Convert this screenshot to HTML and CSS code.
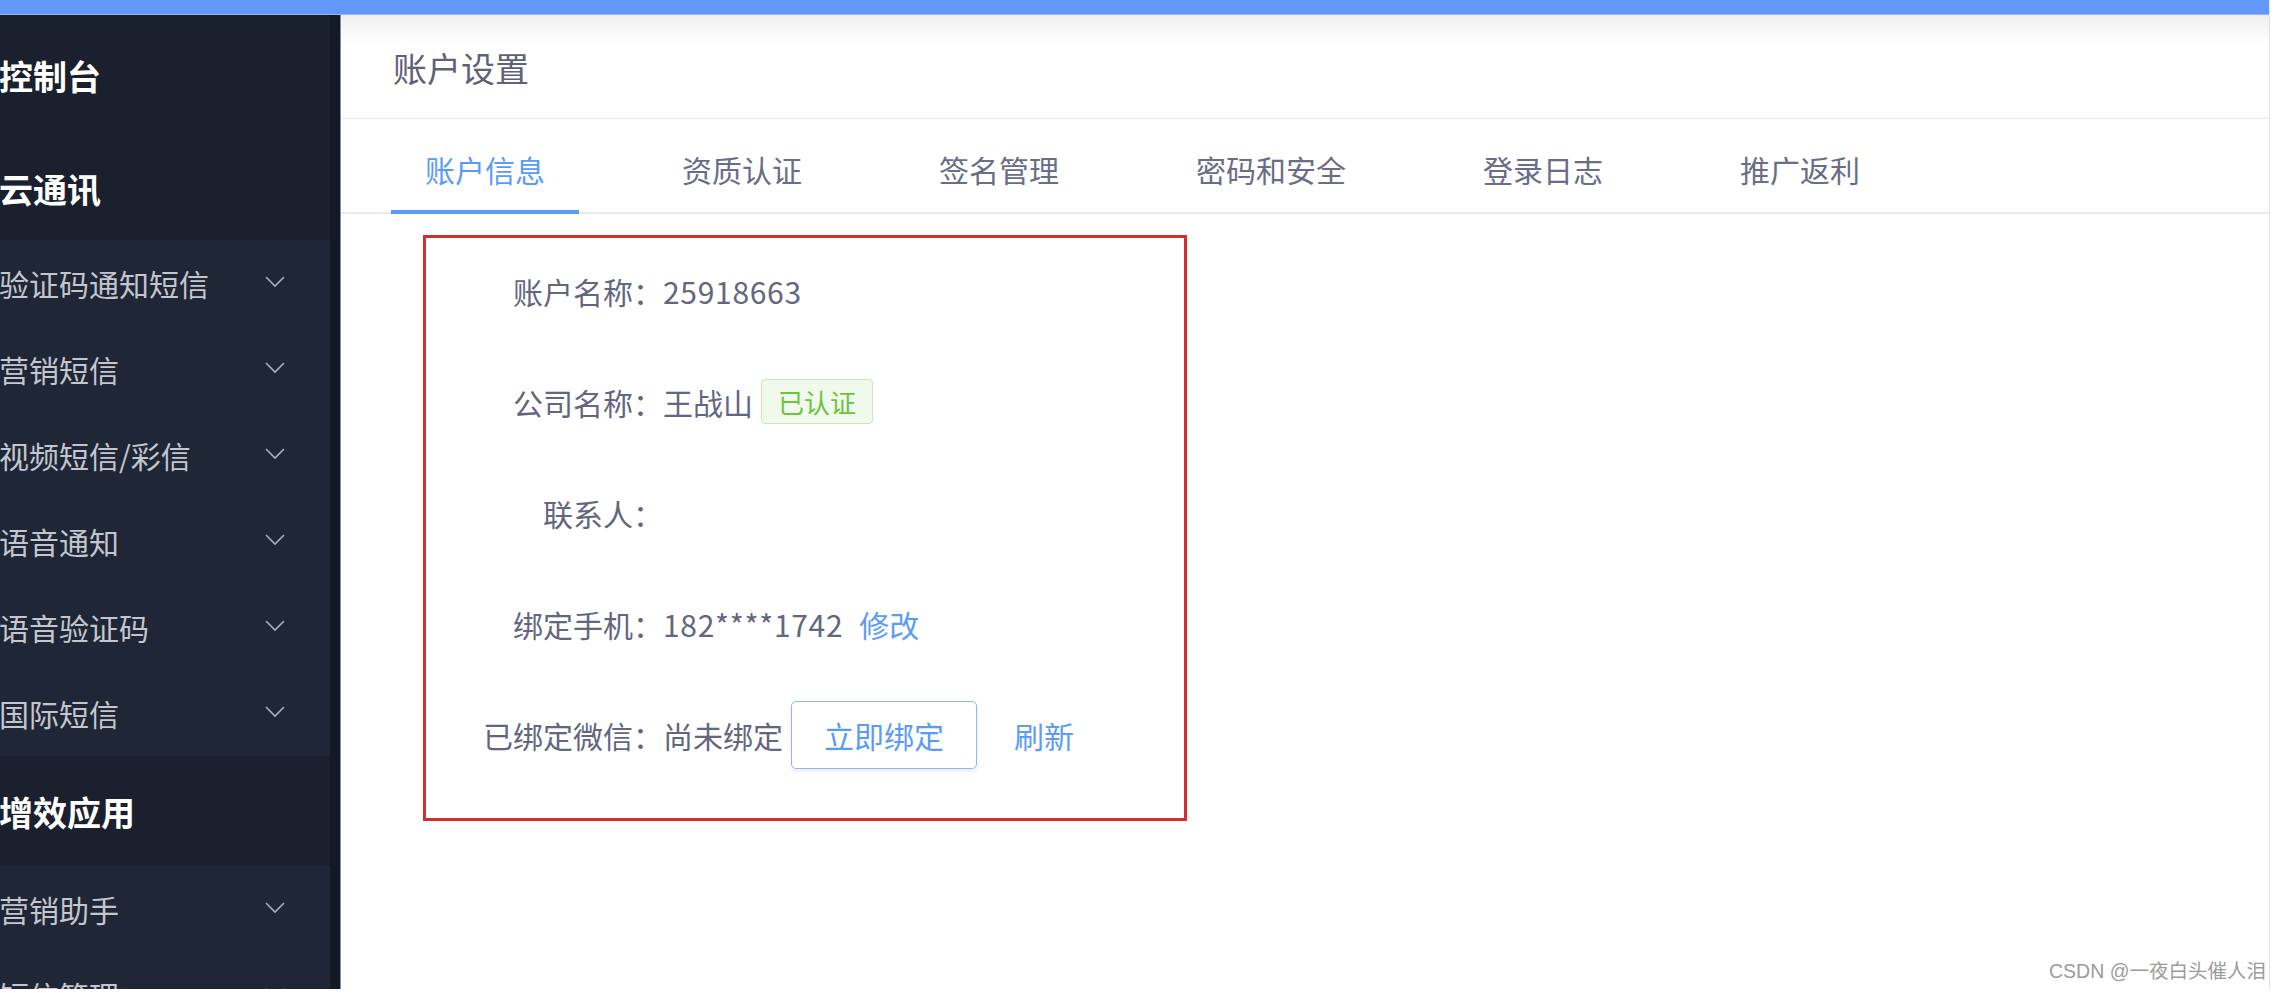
FILE: index.html
```html
<!DOCTYPE html>
<html lang="zh-CN">
<head>
<meta charset="utf-8">
<title>账户设置</title>
<link rel="stylesheet" href="styles.css">
</head>
<body>
<div class="app">
  <div class="topbar"></div>
  <div class="main">
    <aside class="sidebar">
      <div class="menu-title menu-title--first">控制台</div>
      <div class="menu-title">云通讯</div>
      <ul class="submenu">
        <li class="item"><span>验证码通知短信</span><svg class="chev" viewBox="0 0 20 12"><polyline points="1,1 10,10 19,1"/></svg></li>
        <li class="item"><span>营销短信</span><svg class="chev" viewBox="0 0 20 12"><polyline points="1,1 10,10 19,1"/></svg></li>
        <li class="item"><span>视频短信/彩信</span><svg class="chev" viewBox="0 0 20 12"><polyline points="1,1 10,10 19,1"/></svg></li>
        <li class="item"><span>语音通知</span><svg class="chev" viewBox="0 0 20 12"><polyline points="1,1 10,10 19,1"/></svg></li>
        <li class="item"><span>语音验证码</span><svg class="chev" viewBox="0 0 20 12"><polyline points="1,1 10,10 19,1"/></svg></li>
        <li class="item"><span>国际短信</span><svg class="chev" viewBox="0 0 20 12"><polyline points="1,1 10,10 19,1"/></svg></li>
      </ul>
      <div class="menu-title menu-title--mid">增效应用</div>
      <ul class="submenu">
        <li class="item"><span>营销助手</span><svg class="chev" viewBox="0 0 20 12"><polyline points="1,1 10,10 19,1"/></svg></li>
        <li class="item"><span>短信管理</span><svg class="chev" viewBox="0 0 20 12"><polyline points="1,1 10,10 19,1"/></svg></li>
      </ul>
    </aside>
    <div class="sidebar-edge"></div>
    <section class="content">
      <header class="page-header">账户设置</header>
      <nav class="tabs">
        <div class="tab active">账户信息</div>
        <div class="tab">资质认证</div>
        <div class="tab">签名管理</div>
        <div class="tab">密码和安全</div>
        <div class="tab">登录日志</div>
        <div class="tab">推广返利</div>
      </nav>
      <div class="info-box">
        <div class="row"><span class="label">账户名称：</span><span class="value value--num">25918663</span></div>
        <div class="row"><span class="label">公司名称：</span><span class="value">王战山</span><span class="tag">已认证</span></div>
        <div class="row"><span class="label">联系人：</span></div>
        <div class="row"><span class="label">绑定手机：</span><span class="value value--num">182****1742</span><a class="link link--edit">修改</a></div>
        <div class="row"><span class="label">已绑定微信：</span><span class="value">尚未绑定</span><button class="btn">立即绑定</button><a class="link link--refresh">刷新</a></div>
      </div>
    </section>
  </div>
  <div class="watermark">CSDN @一夜白头催人泪</div>
</div>
</body>
</html>
```

FILE: styles.css
```css
* { box-sizing: border-box; }

html, body {
  margin: 0;
  padding: 0;
  background: #ffffff;
}

body {
  font-family: "Noto Sans CJK SC", "Noto Sans", "Liberation Sans", sans-serif;
  width: 2281px;
  height: 993px;
  overflow: hidden;
  position: relative;
}

.app {
  width: 2270px;
  height: 989px;
  display: flex;
  flex-direction: column;
  overflow: hidden;
  border-right: 1px solid #e2e2e2;
}

.topbar {
  height: 15px;
  flex: none;
  background: #6298fa;
  border-bottom: 1px solid #8fb6fb;
}

.main {
  flex: 1;
  display: flex;
  min-height: 0;
}

/* ---------- sidebar ---------- */
.sidebar {
  width: 330px;
  flex: none;
  background: #1a202d;
  overflow: hidden;
}

.sidebar-edge {
  width: 11px;
  flex: none;
  background: #141a25;
  border-right: 1px solid #858a96;
}

.menu-title {
  height: 104px;
  display: flex;
  align-items: center;
  margin-left: -1px;
  color: #ffffff;
  font-size: 34px;
  font-weight: 700;
}

.menu-title--first { height: 121px; }
.menu-title--mid { height: 110px; }

.submenu {
  list-style: none;
  margin: 0;
  padding: 0;
  background: #1f2635;
}

.item {
  height: 86px;
  display: flex;
  align-items: center;
  justify-content: space-between;
  padding-right: 45px;
  margin-left: -1px;
  color: #c3c6ce;
  font-size: 30px;
}

.chev {
  width: 20px;
  height: 12px;
  margin-top: -3px;
  fill: none;
  stroke: #a9aeb9;
  stroke-width: 1.6;
}

/* ---------- content ---------- */
.content {
  flex: 1;
  min-width: 0;
  display: flex;
  flex-direction: column;
  background: #ffffff;
}

.page-header {
  height: 104px;
  flex: none;
  display: flex;
  align-items: center;
  padding-left: 52px;
  padding-top: 2px;
  font-size: 34px;
  color: #5e6178;
  border-bottom: 1px solid #e6e7eb;
  background: linear-gradient(#efefef 0, #ffffff 30px);
}

.tabs {
  height: 95px;
  flex: none;
  display: flex;
  padding-left: 50px;
  border-bottom: 2px solid #e9eaef;
}

.tab {
  height: 95px;
  padding: 8px 34px 0;
  margin-right: 69px;
  margin-bottom: -2px;
  display: flex;
  align-items: center;
  font-size: 30px;
  color: #6a6d86;
  border-bottom: 4px solid transparent;
  white-space: nowrap;
}

.tab.active {
  color: #5b9bf8;
  border-bottom-color: #5b9bf8;
}

/* ---------- info box ---------- */
.info-box {
  width: 764px;
  height: 586px;
  margin: 21px 0 0 82px;
  border: 3px solid #d2302c;
}

.row {
  height: 111px;
  display: flex;
  align-items: center;
  font-size: 30px;
  color: #63667f;
}

.row:first-child { margin-top: -3px; }

.label {
  width: 237px;
  flex: none;
  text-align: right;
  white-space: nowrap;
}

.value { white-space: nowrap; }

.value--num { letter-spacing: 0.7px; }

.tag {
  margin-left: 8px;
  height: 45px;
  padding: 0 16px;
  display: flex;
  align-items: center;
  font-size: 26px;
  color: #6cc33f;
  background: #f1f9ec;
  border: 1px solid #c7e9b5;
  border-radius: 4px;
}

.link {
  color: #5d9cf6;
  cursor: pointer;
}

.link--edit { margin-left: 16px; }
.link--refresh { margin-left: 37px; }

.btn {
  margin-left: 8px;
  width: 186px;
  height: 68px;
  padding: 0;
  font-family: inherit;
  font-size: 30px;
  color: #5b9bf8;
  background: #ffffff;
  border: 1px solid #8fb7f7;
  border-radius: 5px;
  box-shadow: 0 3px 4px rgba(0, 0, 0, 0.07);
}

/* ---------- watermark ---------- */
.watermark {
  position: absolute;
  right: 15px;
  bottom: 9px;
  font-family: "Liberation Sans", "Noto Sans CJK SC", sans-serif;
  font-size: 19.5px;
  color: #9c9c9c;
  text-shadow: 0 0 2px #ffffff;
  white-space: nowrap;
}
```
